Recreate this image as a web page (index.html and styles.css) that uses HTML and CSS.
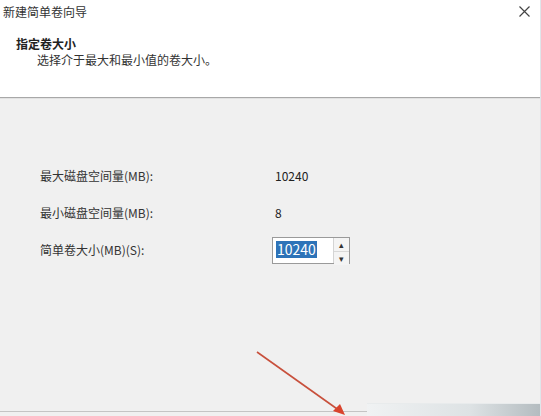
FILE: index.html
```html
<!DOCTYPE html>
<html lang="zh-CN">
<head>
    <meta charset="UTF-8">
    <title>新建简单卷向导</title>
    <link rel="stylesheet" href="styles.css">
</head>
<body>

<div class="window">
    <div class="header">
        <div class="titlebar">
            <span class="title">新建简单卷向导</span>
            <svg class="close" width="11" height="11" viewBox="0 0 11 11">
                <path d="M0.5 0.5 L10.5 10.5 M10.5 0.5 L0.5 10.5" stroke="#444" stroke-width="1.2"/>
            </svg>
        </div>
        <div class="heading">指定卷大小</div>
        <div class="subheading">选择介于最大和最小值的卷大小。</div>
    </div>

    <div class="content">
        <div class="form">
            <div class="label">最大磁盘空间量(MB):</div>
            <div class="value">10240</div>

            <div class="label">最小磁盘空间量(MB):</div>
            <div class="value">8</div>

            <div class="label">简单卷大小(MB)(S):</div>
            <div class="spin">
                <div class="spin-input"><span class="selected">10240</span></div>
                <div class="spin-buttons">
                    <div class="spin-btn">&#9652;</div>
                    <div class="spin-btn">&#9662;</div>
                </div>
            </div>
        </div>
    </div>

    <div class="footer">
        <div class="footer-line"></div>
        <div class="footer-bar"></div>
    </div>

    <!-- red annotation arrow -->
    <svg class="arrow" width="541" height="416" viewBox="0 0 541 416">
        <line x1="257" y1="352" x2="340" y2="411" stroke="#c8503c" stroke-width="1.6"/>
        <polygon points="345,415 333,411 340,404" fill="#d9442e"/>
    </svg>
</div>

</body>
</html>
```

FILE: styles.css
```css
body {
    margin: 0;
    font-family: "Noto Sans CJK SC", "Noto Sans", sans-serif;
    font-size: 12px;
    color: #222;
    background: #f0f0f0;
}
.window {
    position: relative;
    width: 541px;
    height: 416px;
    display: flex;
    flex-direction: column;
    overflow: hidden;
    background: #f0f0f0;
    border-right: 1px solid #dfe6ea;
    box-sizing: border-box;
}
.header {
    height: 97px;
    background: #fff;
    border-bottom: 1px solid #a8a8a8;
    box-shadow: 0 1px 0 #e2e2e2;
}
.titlebar {
    height: 22px;
    display: flex;
    align-items: center;
    justify-content: space-between;
    padding: 0 10px 0 3px;
}
.title {
    color: #333;
}
.close {
    display: block;
}
.heading {
    margin-top: 14px;
    padding-left: 16px;
    font-weight: bold;
    line-height: 16px;
}
.subheading {
    padding-left: 37px;
    line-height: 15px;
    color: #333;
}
.content {
    flex: 1;
    padding-top: 65px;
}
.form {
    display: grid;
    grid-template-columns: 232px auto;
    grid-auto-rows: 24px;
    row-gap: 13px;
    padding-left: 40px;
    align-items: center;
}
.label {
    color: #333;
}
.value {
    padding-left: 3px;
    color: #222;
}
.spin {
    display: flex;
    width: 78px;
    height: 27px;
    border: 1px solid #9a9a9a;
    background: #fff;
    box-sizing: border-box;
    margin-top: 2px;
}
.spin-input {
    flex: 1;
    padding: 3px 0 0 3px;
    border-right: 1px solid #d4d4d4;
}
.selected {
    display: inline-block;
    background: #2d73b8;
    color: #fff;
    font-size: 14px;
    line-height: 17px;
    padding: 0 1px;
}
.spin-buttons {
    width: 15px;
    display: flex;
    flex-direction: column;
}
.spin-btn {
    flex: 1;
    display: flex;
    align-items: center;
    justify-content: center;
    font-size: 9px;
    color: #333;
    background: #f4f4f4;
    border-bottom: 1px solid #d8d8d8;
}
.spin-btn:last-child {
    border-bottom: none;
}
.footer {
    height: 14px;
    display: flex;
    align-items: flex-end;
}
.footer-line {
    flex: 1;
    height: 3px;
    border-top: 1px solid #c4c4c4;
    margin-bottom: 1px;
}
.footer-bar {
    width: 173px;
    height: 12px;
    background: linear-gradient(to right, #f0f2f3, #dde2e4 60%, #b4bcc0);
    border-top: 1px solid #e8ebec;
}
.arrow {
    position: absolute;
    left: 0;
    top: 0;
    pointer-events: none;
}
```
